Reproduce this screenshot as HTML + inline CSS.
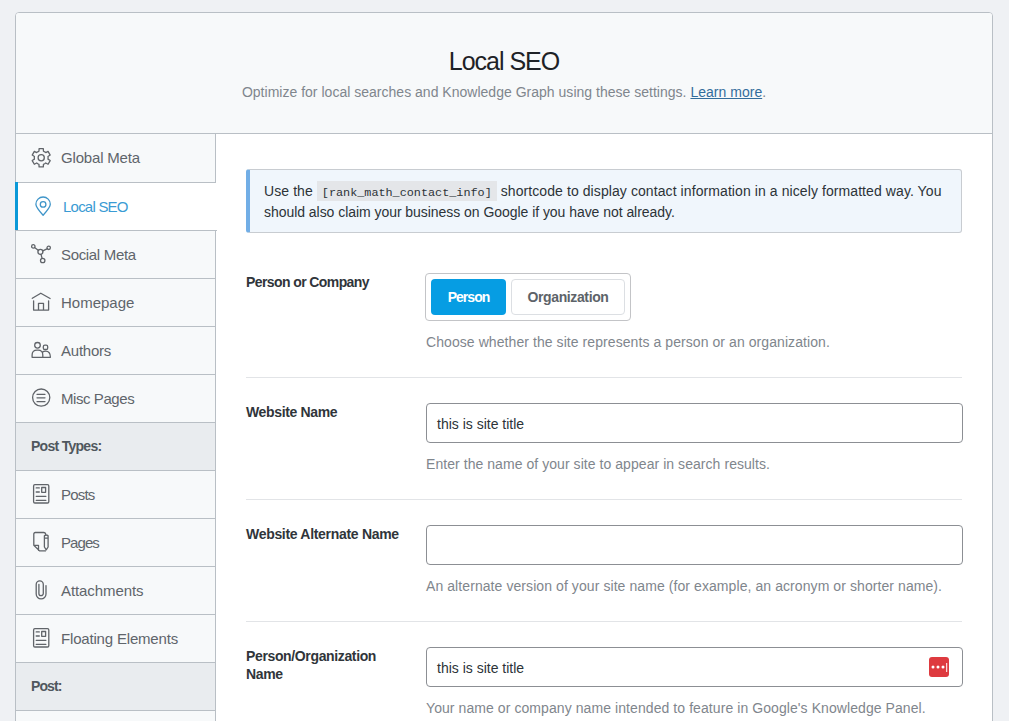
<!DOCTYPE html>
<html><head><meta charset="utf-8">
<style>
*{box-sizing:border-box;margin:0;padding:0}
html,body{width:1009px;height:721px;overflow:hidden;background:#eff1f4;font-family:"Liberation Sans",sans-serif}
.a{position:absolute;white-space:nowrap}
#card{position:absolute;left:15px;top:12px;width:978px;height:760px;border:1px solid #b9bfc5;border-radius:4px;background:#fff}
#hdr{position:absolute;left:16px;top:13px;width:976px;height:121px;background:#f7f9fa;border-bottom:1px solid #b9bfc5;border-radius:3px 3px 0 0}
#title{left:16px;width:976px;text-align:center;top:49px;font-size:25px;line-height:25px;color:#1e2226;letter-spacing:-1px}
#sub{left:16px;width:976px;text-align:center;top:85px;font-size:14px;line-height:14px;color:#7f868d;letter-spacing:0.015px}
#sub a{color:#336d9c;text-decoration:underline}
.nav{position:absolute;left:16px;width:200px;height:48px;background:#f7f9fa;border-right:1px solid #b9bfc5;border-bottom:1px solid #b9bfc5}
.nav .t{position:absolute;left:45px;top:16px;font-size:15px;line-height:15px;color:#5f656b;white-space:nowrap}
.nav svg{position:absolute;left:12px;top:9px;width:28px;height:28px;fill:none;stroke:#606469;stroke-width:1.3;stroke-linejoin:round;stroke-linecap:round}
.nav.act{background:#fff;border-right:none;width:201px}
.nav.act::before{content:"";position:absolute;left:-1px;top:-1px;width:3px;height:48px;background:#0b99d8}
.nav.act .t{color:#3a9bd4;left:47px}
.nav.act svg{stroke:#3f95c9}
.nav.grp{background:#e9ecef}
.nav.grp .t{font-weight:bold;font-size:14px;left:15px;color:#50575e}
.notice{position:absolute;left:246px;top:169px;width:716px;height:64px;background:#f0f6fc;border:1px solid #c8ccd1;border-left:4px solid #72aee6;border-radius:3px}
.ntext{font-size:14px;line-height:21px;color:#2c3338}
code{font-family:"Liberation Mono",monospace;font-size:11.8px;background:#e4e6e9;padding:5px 5px 1px;letter-spacing:0}
.lbl{position:absolute;left:246px;font-size:14px;line-height:18px;font-weight:bold;color:#30353a}
.desc{position:absolute;left:426px;font-size:14px;line-height:14px;color:#7f868d;white-space:nowrap}
.hr{position:absolute;left:246px;width:716px;height:1px;background:#e2e4e7}
.inp{position:absolute;left:426px;width:537px;height:40px;border:1px solid #8c8f94;border-radius:4px;background:#fff}
.inp .v{position:absolute;left:10px;top:13px;font-size:14px;line-height:14px;color:#2c3338;white-space:nowrap}
.grpbox{position:absolute;left:425px;top:273px;width:206px;height:48px;border:1px solid #c3c4c7;border-radius:4px;background:#fff}
.btn1{position:absolute;left:5px;top:5px;width:75px;height:36px;border-radius:4px;background:#069de3;color:#fff;font-weight:bold;font-size:14px;line-height:36px;text-align:center}
.btn2{position:absolute;left:85px;top:5px;width:114px;height:36px;border-radius:4px;background:#fff;border:1px solid #dcdfe3;color:#5d6369;font-weight:bold;font-size:14px;line-height:34px;text-align:center}
.lp{position:absolute;left:502px;top:9px;width:20px;height:20px;border-radius:3px;background:#de3a3f}
</style></head><body>
<div id="card"></div>
<div id="hdr"></div>
<div id="title" class="a m">Local SEO</div>
<div id="sub" class="a m">Optimize for local searches and Knowledge Graph using these settings. <a>Learn more</a>.</div>
<div class="nav" style="top:134px;height:49px"><svg style="top:10px" viewBox="0 0 28 28"><path d="M9.75 7.82 L10.95 7.28 L11.09 4.64 L15.31 4.64 L15.45 7.28 L16.65 7.82 L17.73 8.59 L20.07 7.39 L22.19 11.05 L19.97 12.48 L20.10 13.80 L19.97 15.12 L22.19 16.55 L20.07 20.21 L17.73 19.01 L16.65 19.78 L15.45 20.32 L15.31 22.96 L11.09 22.96 L10.95 20.32 L9.75 19.78 L8.67 19.01 L6.33 20.21 L4.21 16.55 L6.43 15.12 L6.30 13.80 L6.43 12.48 L4.21 11.05 L6.33 7.39 L8.67 8.59Z"/><circle cx="13.2" cy="13.8" r="3.1"/></svg><span class="t m" style="letter-spacing:-0.18px">Global Meta</span></div>
<div class="nav act" style="top:183px"><svg viewBox="0 0 28 28"><path d="M15.1 23.2 C10.5 18.1 7.9 15.2 7.9 12.2 A7.2 7.2 0 0 1 22.3 12.2 C22.3 15.2 19.7 18.1 15.1 23.2Z"/><circle cx="15.1" cy="12.4" r="2.8"/></svg><span class="t m" style="letter-spacing:-0.775px">Local SEO</span></div>
<div class="nav" style="top:231px"><svg viewBox="0 0 28 28"><path d="M6.6 7.6 L10.5 10.6 M19.4 8.6 L14.8 10.9 M13 14.3 L14.1 18.3"/><circle cx="5.3" cy="6.4" r="1.7"/><circle cx="20.7" cy="7.8" r="1.7"/><circle cx="12.4" cy="11.8" r="2.5"/><circle cx="14.7" cy="20.5" r="2.2"/></svg><span class="t m" style="letter-spacing:-0.33px">Social Meta</span></div>
<div class="nav" style="top:279px"><svg viewBox="0 0 28 28"><path d="M4.3 10.3 L12.8 5.2 L22.1 10.5 M5.6 12.8 V22.1 H20.6 V12.8 M10.5 22.1 V15.3 H15.5 V22.1"/></svg><span class="t m">Homepage</span></div>
<div class="nav" style="top:327px"><svg viewBox="0 0 28 28"><circle cx="9.5" cy="9.3" r="2.8"/><rect x="15.3" y="9.1" width="4.4" height="4.4" rx="1.6"/><path d="M4.1 21.3 V19 Q4.1 14.2 9 14.2 H10 Q14.8 14.2 14.8 19 V21.3 Z M14.8 21.3 H22.4 Q22.4 15.1 17.6 15.1 Q15.6 15.1 14.4 16.3"/></svg><span class="t m" style="letter-spacing:-0.233px">Authors</span></div>
<div class="nav" style="top:375px"><svg viewBox="0 0 28 28"><circle cx="13.2" cy="13.6" r="8.6"/><path d="M9 10.3 H17 M9 13.8 H17 M9 17.6 H17"/></svg><span class="t m" style="letter-spacing:-0.433px">Misc Pages</span></div>
<div class="nav grp" style="top:423px"><span class="t m" style="letter-spacing:-0.72px">Post Types:</span></div>
<div class="nav" style="top:471px"><svg viewBox="0 0 28 28"><rect x="5.6" y="4.6" width="15.2" height="18.4" rx="1.3"/><rect x="13.7" y="7.5" width="3.9" height="4.8"/><path d="M8.2 7.9 H11.3 M8.2 12 H11.3 M8.2 16.3 H17.9 M8.2 20.3 H17.9"/></svg><span class="t m" style="letter-spacing:-0.8px">Posts</span></div>
<div class="nav" style="top:519px"><svg viewBox="0 0 28 28"><path d="M17.6 5.8 Q17.2 4.5 15.8 4.5 H7.3 Q5.8 4.5 5.8 6 V17.3 L11.5 22.9 H17.4 M5.8 17.3 H10.5 V22.3 M16.4 7.8 Q18.2 6.1 20.1 7.8 V19 L18.25 21.8 L16.4 19 Z M16.4 10.2 H20.1"/></svg><span class="t m" style="letter-spacing:-0.925px">Pages</span></div>
<div class="nav" style="top:567px"><svg viewBox="0 0 28 28"><path d="M18 9.6 V18 A4.9 4.9 0 0 1 8.2 18 V8.5 A3.55 3.55 0 0 1 15.3 8.5 V17.5 A2.2 2.2 0 0 1 10.9 17.5 V8.3"/></svg><span class="t m" style="letter-spacing:-0.09px">Attachments</span></div>
<div class="nav" style="top:615px"><svg viewBox="0 0 28 28"><rect x="5.6" y="4.6" width="15.2" height="18.4" rx="1.3"/><rect x="13.7" y="7.5" width="3.9" height="4.8"/><path d="M8.2 7.9 H11.3 M8.2 12 H11.3 M8.2 16.3 H17.9 M8.2 20.3 H17.9"/></svg><span class="t m" style="letter-spacing:-0.181px">Floating Elements</span></div>
<div class="nav grp" style="top:663px"><span class="t m" style="letter-spacing:-0.9px">Post:</span></div>
<div class="nav" style="top:711px"></div>
<div class="notice"><div class="a ntext m" style="left:14px;top:11px;letter-spacing:0.085px">Use the <code>[rank_math_contact_info]</code> shortcode to display contact information in a nicely formatted way. You</div><div class="a ntext m" style="left:14px;top:32px;letter-spacing:-0.045px">should also claim your business on Google if you have not already.</div></div>

<div class="lbl m" style="top:273px;letter-spacing:-0.594px">Person or Company</div>
<div class="grpbox"><div class="btn1 m" style="letter-spacing:-0.96px">Person</div><div class="btn2 m" style="letter-spacing:-0.382px">Organization</div></div>
<div class="desc m" style="top:335px;letter-spacing:0.073px">Choose whether the site represents a person or an organization.</div>
<div class="hr" style="top:377px"></div>

<div class="lbl m" style="top:403px;letter-spacing:-0.345px">Website Name</div>
<div class="inp" style="top:403px"><span class="v m">this is site title</span></div>
<div class="desc m" style="top:457px;letter-spacing:0.056px">Enter the name of your site to appear in search results.</div>
<div class="hr" style="top:499px"></div>

<div class="lbl m" style="top:525px;letter-spacing:-0.305px">Website Alternate Name</div>
<div class="inp" style="top:525px"></div>
<div class="desc m" style="top:579px;letter-spacing:0.079px">An alternate version of your site name (for example, an acronym or shorter name).</div>
<div class="hr" style="top:621px"></div>

<div class="lbl m" style="top:647px;letter-spacing:-0.361px">Person/Organization<br>Name</div>
<div class="inp" style="top:647px"><span class="v m">this is site title</span><div class="lp"><svg width="20" height="20" viewBox="0 0 20 20"><circle cx="4" cy="10" r="1.5" fill="#fff"/><circle cx="9" cy="10" r="1.5" fill="#fff"/><circle cx="14" cy="10" r="1.5" fill="#fff"/><rect x="17.2" y="6" width="1" height="9" fill="#fff"/></svg></div></div>
<div class="desc m" style="top:701px;letter-spacing:0.077px">Your name or company name intended to feature in Google's Knowledge Panel.</div>
</body></html>
